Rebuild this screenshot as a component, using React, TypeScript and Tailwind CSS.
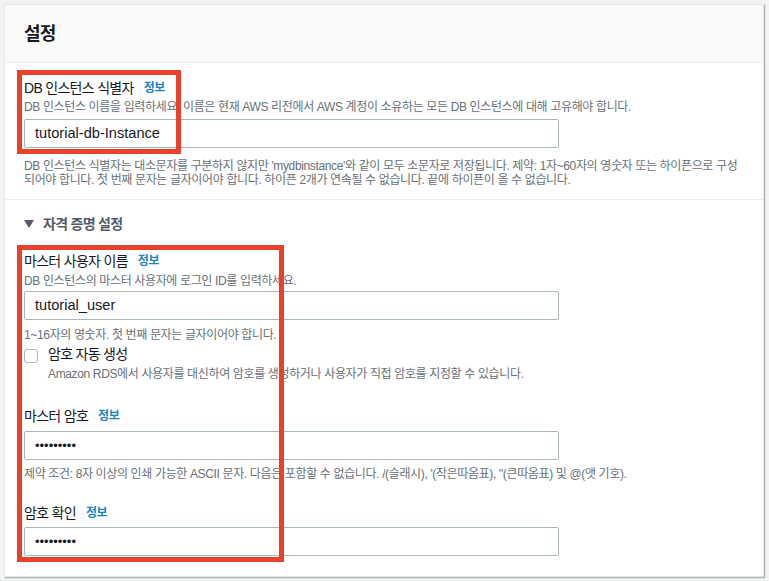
import React from 'react';

const font = { fontFamily: '"Liberation Sans", "Noto Sans CJK KR", sans-serif' };

function InfoLink() {
  return <span className="ml-[10px] text-[12px] font-bold tracking-[-0.03em] text-[#1a84c5]">정보</span>;
}

function TextBox({ value, dots }: { value: string; dots?: boolean }) {
  return (
    <div className="flex h-[29px] w-[535px] items-center rounded-[2px] border border-[#aab7b8] bg-white pl-[10px]">
      <span className={dots ? 'text-[13px] text-[#16191f]' : 'text-[14.6px] text-[#16191f]'}>{value}</span>
    </div>
  );
}

export default function App() {
  return (
    <div className="min-h-screen bg-[#f2f3f3] pl-[4px] pt-[4px]" style={font}>
      <div className="relative w-[760px] border border-[#e4e8e8] bg-white shadow-[1px_1px_1px_0_rgba(0,28,36,0.3)]">
        {/* header */}
        <div className="h-[58px] border-b border-[#eaeded] bg-[#fafafa] px-[19px] pt-[17px]">
          <h2 className="text-[18px] font-bold leading-[24px] tracking-[-0.05em] text-[#16191f]">설정</h2>
        </div>

        {/* section 1 */}
        <div className="border-b border-[#eaeded] px-[19px] pb-[12px] pt-[16px]">
          <div className="flex items-center text-[14px] leading-[18px] tracking-[-0.05em] text-[#16191f]">
            DB 인스턴스 식별자
            <InfoLink />
          </div>
          <p className="mt-[2px] text-[12px] leading-[16px] tracking-[-0.03em] text-[#687078]">
            DB 인스턴스 이름을 입력하세요. 이름은 현재 AWS 리전에서 AWS 계정이 소유하는 모든 DB 인스턴스에 대해 고유해야 합니다.
          </p>
          <div className="mt-[4px]">
            <TextBox value="tutorial-db-Instance" />
          </div>
          <p className="mt-[11px] w-[714px] text-[12px] leading-[14px] tracking-[-0.03em] text-[#687078]">
            DB 인스턴스 식별자는 대소문자를 구분하지 않지만 'mydbinstance'와 같이 모두 소문자로 저장됩니다. 제약: 1자~60자의 영숫자 또는 하이픈으로 구성되어야 합니다. 첫 번째 문자는 글자이어야 합니다. 하이픈 2개가 연속될 수 없습니다. 끝에 하이픈이 올 수 없습니다.
          </p>
        </div>

        {/* section 2 */}
        <div className="px-[19px] pb-[20px] pt-[14px]">
          <div className="flex items-center text-[14px] font-bold leading-[20px] tracking-[-0.05em] text-[#545b64]">
            <svg width="10" height="8" viewBox="0 0 10 8" className="mr-[9px]">
              <path d="M0 0h10L5 8z" fill="#545b64" />
            </svg>
            자격 증명 설정
          </div>

          <div className="mt-[18px] flex items-center text-[14px] leading-[18px] tracking-[-0.05em] text-[#16191f]">
            마스터 사용자 이름
            <InfoLink />
          </div>
          <p className="mt-[3px] text-[12px] leading-[16px] tracking-[-0.03em] text-[#687078]">DB 인스턴스의 마스터 사용자에 로그인 ID를 입력하세요.</p>
          <div className="mt-[2px]">
            <TextBox value="tutorial_user" />
          </div>
          <p className="mt-[8px] text-[12px] leading-[14px] tracking-[-0.03em] text-[#687078]">1~16자의 영숫자. 첫 번째 문자는 글자이어야 합니다.</p>

          <div className="mt-[3px] flex">
            <div className="mt-[4px] h-[14px] w-[14px] rounded-[3px] border border-[#aab7b8] bg-white" />
            <div className="ml-[10px]">
              <div className="text-[14px] leading-[18px] tracking-[-0.05em] text-[#16191f]">암호 자동 생성</div>
              <p className="mt-[3px] text-[12px] leading-[16px] tracking-[-0.03em] text-[#687078]">
                Amazon RDS에서 사용자를 대신하여 암호를 생성하거나 사용자가 직접 암호를 지정할 수 있습니다.
              </p>
            </div>
          </div>

          <div className="mt-[25px] flex items-center text-[14px] leading-[18px] tracking-[-0.05em] text-[#16191f]">
            마스터 암호
            <InfoLink />
          </div>
          <div className="mt-[6px]">
            <TextBox value="•••••••••" dots />
          </div>
          <p className="mt-[7px] text-[12px] leading-[14px] tracking-[-0.03em] text-[#687078]">
            제약 조건: 8자 이상의 인쇄 가능한 ASCII 문자. 다음은 포함할 수 없습니다. /(슬래시), '(작은따옴표), "(큰따옴표) 및 @(앳 기호).
          </p>

          <div className="mt-[23px] flex items-center text-[14px] leading-[18px] tracking-[-0.05em] text-[#16191f]">
            암호 확인
            <InfoLink />
          </div>
          <div className="mt-[5px]">
            <TextBox value="•••••••••" dots />
          </div>
        </div>

        {/* annotation boxes */}
        <div className="pointer-events-none absolute left-[12px] top-[65px] h-[84px] w-[164px] border-[5px] border-[#e9412b]" />
        <div className="pointer-events-none absolute left-[12px] top-[240px] h-[317px] w-[267px] border-[5px] border-[#e9412b]" />
      </div>
    </div>
  );
}
